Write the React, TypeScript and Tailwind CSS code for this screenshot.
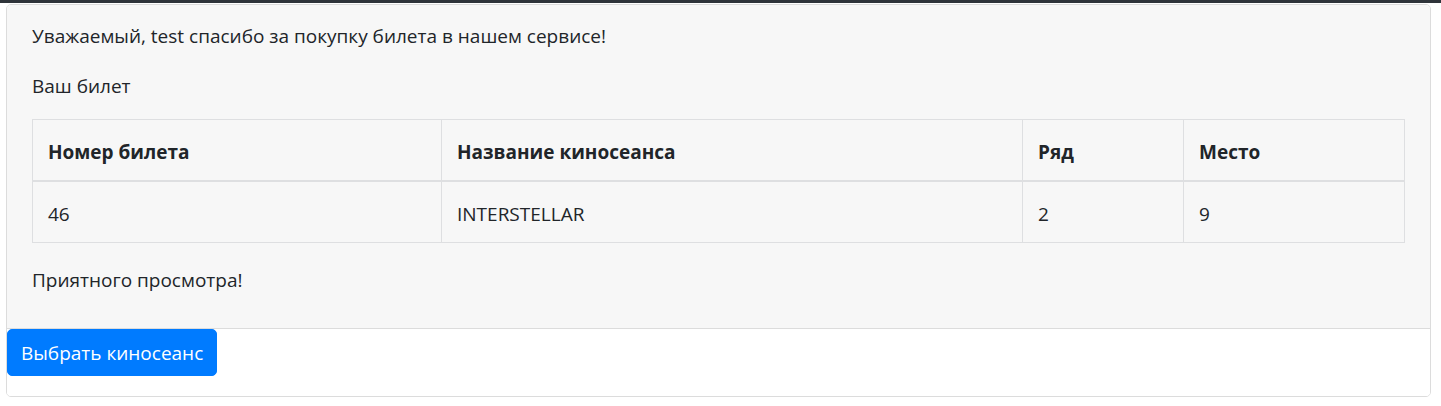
import React from "react";

const rows = [{ id: "46", title: "INTERSTELLAR", row: "2", seat: "9" }];

const App: React.FC = () => {
  return (
    <div
      className="min-h-screen bg-white text-[#212529]"
      style={{ fontFamily: '"Open Sans", "Noto Sans", "Liberation Sans", sans-serif' }}
    >
      {/* Top bar */}
      <div className="h-[3px] bg-[#2f343a]" />

      {/* Ticket card */}
      <div className="mt-[1px] ml-[6px] mr-[10px] border border-[#dcdcdc] rounded-[5px] overflow-hidden">
        <div className="bg-[#f7f7f7] border-b border-[#dcdcdc] px-[25px] pt-[16px] pb-[15px] text-[19px] leading-[30px]">
          <p className="mb-[20px]">Уважаемый, test спасибо за покупку билета в нашем сервисе!</p>
          <p className="mb-[18px]">Ваш билет</p>

          <table className="w-full border-collapse mb-[22px] text-left">
            <colgroup>
              <col className="w-[409px]" />
              <col className="w-[581px]" />
              <col className="w-[161px]" />
              <col />
            </colgroup>
            <thead>
              <tr>
                <th className="border border-[#dedfe1] border-b-2 px-[15px] pt-[17px] pb-[13px] font-bold">Номер билета</th>
                <th className="border border-[#dedfe1] border-b-2 px-[15px] pt-[17px] pb-[13px] font-bold">Название киносеанса</th>
                <th className="border border-[#dedfe1] border-b-2 px-[15px] pt-[17px] pb-[13px] font-bold">Ряд</th>
                <th className="border border-[#dedfe1] border-b-2 px-[15px] pt-[17px] pb-[13px] font-bold">Место</th>
              </tr>
            </thead>
            <tbody>
              {rows.map((r) => (
                <tr key={r.id}>
                  <td className="border border-[#dedfe1] px-[15px] pt-[17px] pb-[13px]">{r.id}</td>
                  <td className="border border-[#dedfe1] px-[15px] pt-[17px] pb-[13px]">{r.title}</td>
                  <td className="border border-[#dedfe1] px-[15px] pt-[17px] pb-[13px]">{r.row}</td>
                  <td className="border border-[#dedfe1] px-[15px] pt-[17px] pb-[13px]">{r.seat}</td>
                </tr>
              ))}
            </tbody>
          </table>

          <p className="mb-[18px]">Приятного просмотра!</p>
        </div>

        {/* Footer */}
        <div className="bg-white pb-[20px]">
          <button className="bg-[#007bff] hover:bg-[#0069d9] text-white text-[19px] leading-[30px] px-[13px] pt-[8px] pb-[7px] border border-[#007bff] rounded-[5px]">
            Выбрать киносеанс
          </button>
        </div>
      </div>
    </div>
  );
};

export default App;
